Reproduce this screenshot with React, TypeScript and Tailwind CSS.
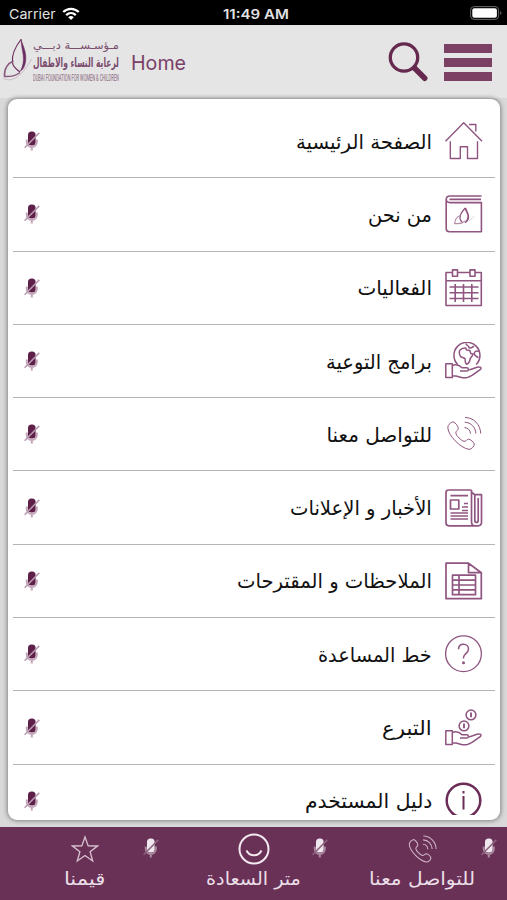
import { useLayoutEffect, useRef, type ReactNode } from "react";

const arabic = "font-['DejaVu_Sans',sans-serif]";

/** Condenses or widens a single line so that it fills its box exactly. */
function FitText({ children, box, text, dir = "rtl" }: { children: string; box: string; text: string; dir?: "rtl" | "ltr" }) {
  const outer = useRef<HTMLDivElement>(null);
  const inner = useRef<HTMLSpanElement>(null);
  useLayoutEffect(() => {
    const fit = () => {
      if (!outer.current || !inner.current) return;
      const ratio = outer.current.clientWidth / inner.current.offsetWidth;
      inner.current.style.transform = `scaleX(${ratio})`;
    };
    fit();
    document.fonts?.ready.then(fit);
  }, [children]);
  return (
    <div ref={outer} dir={dir} className={`${box} flex shrink-0 items-center`}>
      <span ref={inner} className={`${text} shrink-0 whitespace-nowrap ${dir === "rtl" ? "origin-right" : "origin-left"}`}>
        {children}
      </span>
    </div>
  );
}

function Icon({ children, width = 1.3 }: { children: ReactNode; width?: number }) {
  return (
    <svg viewBox="0 0 38 38" className="size-[38px] shrink-0" fill="none" stroke="#8f5580" strokeWidth={width} strokeLinejoin="round">
      {children}
    </svg>
  );
}

function Mic({ light = false }: { light?: boolean }) {
  const body = light ? "#f1e8ef" : "#5e2049";
  const frame = light ? "#a98a9f" : "#c3a5ba";
  const slash = light ? "#8d6580" : "#b79ab0";
  return (
    <svg viewBox="0 0 16 20" className="h-5 w-4 shrink-0" fill="none">
      <path d="M2.800 8.500v2.500c0 3 2.200 4.900 5 4.900s5-1.900 5-4.900V8.500M7.800 16v3.400" stroke={frame} strokeWidth="2" />
      <rect x="4" y=".4" width="7.600" height="14" rx="3.500" fill={body} />
      <path d="M.6 16.800 15.300 1.900" stroke={slash} strokeWidth="1.500" />
    </svg>
  );
}

const hand = (
  <path d="M.8 21.800h6.500v13.700H.8zM7.300 23.500c4-1.500 7.200-.3 9.700 2.300h4.700c2.300 0 2.300 3.200 0 3.200H15M22.800 28c4.700-.5 8.500-3.200 11.200-3 1.800 0 2.700 1.300 1.500 2.300-4.500 3.200-8.500 7-13.300 8.300-5.200 1.400-8.800-2.200-14.900-1.800" />
);

const handset = (
  <path d="M3.200 10.700c1-2 3-3.500 5-3.900 2.500 1 5 4.500 5.100 6.800-.1 1.700-2.500 2.300-2.500 4.300.5 3 5.200 7.500 8.200 8.400 2 .4 2.800-2.100 4.600-2.100 2.100.3 5 2.800 5.700 4.900.2 2.200-2.900 5.300-5.300 5.300C15 33 3.200 20 2.900 13.200c0-.9 0-1.800.3-2.500Z" />
);
const waves = (
  <path d="M20 2.500c8.500 0 15.500 7 15.700 16M19.700 7.200c6.200.2 10.900 5.100 11.200 11.300M19.500 12.600c3.500.2 5.700 2.500 6 6" />
);

const flame = (
  <>
    <path d="M20.300 13c-3 3-5.600 7.500-5.300 10.500.2 1.800 1.500 2.500 2.200 4" />
    <path d="M20.300 13c.5 3 3.300 5 3 9-.2 3-1.500 4.500-3.300 5.500" strokeWidth="1.800" />
    <path d="M15.500 20.500c-3.500 1-5.500 3.800-5.800 8 3.800.4 8-.3 11-2.500" stroke="#b48fa9" strokeWidth="1.300" />
  </>
);

type Entry = { label: string; box: string; icon: ReactNode };

const entries: Entry[] = [
  {
    label: "الصفحة الرئيسية",
    box: "w-[136px]",
    icon: (
      <Icon width={1.4}>
        <path d="M.5 19.300 18.700 .8 37 19.300M24 2.500h6.800v7M5.300 19.300v17.200h10V24.700h7.200v11.800h10V19.300" />
      </Icon>
    ),
  },
  {
    label: "من نحن",
    box: "w-[64px]",
    icon: (
      <Icon width={1.6}>
        <path d="M36.500 1H5.200Q1.200 1 1.200 4.500V33.500q0 3.200 3.200 3.200h32V7.600H5Q1.200 7.600 1.200 4.300M4.500 4.400h31.500" />
        <g strokeWidth="1.300">{flame}</g>
        <path d="m24 26 5.500-5" stroke="#d9c3d3" strokeWidth=".7" />
      </Icon>
    ),
  },
  {
    label: "الفعاليات",
    box: "w-[75px]",
    icon: (
      <Icon width={1.6}>
        <path d="M7.500 3.500H1v33h35.300v-33H30M12.500 3.500H25M1 11.800h35.300M7.500 .9h5v6.300h-5zM25 .9h5v6.300h-5zM10.200 15v18M18.500 15v18M26.800 15v18M4.500 18h29M4.500 23.700h29M4.500 29.500h29" />
      </Icon>
    ),
  },
  {
    label: "برامج التوعية",
    box: "w-[106px]",
    icon: (
      <Icon width={1.5}>
        <path d="M12.700 22.500A13 13 0 1 1 31.200 22.500" />
        <path d="M14.500 8.500c1.800-2 3.500-2.800 6.200-2.500l.8 2 3.300.5 1 3 2.200.5c-.3 2.500-2.800 3.500-3 5.500-.5 2.500-2 4.500-3.600 4.700-1.400-1.200-1.300-3.500-1.400-5.700l-4.300-1.700c-1.400-1.800-1.700-4-1.200-6.300ZM21 1.300c.5 2.500 3 2 3 4.500 2 .8 3.200-.5 5-1.800M33.800 9.500c-2.600-1-4.500 0-4.600 2.200.3 2.300 2.500 3 4.300 4" />
        {hand}
      </Icon>
    ),
  },
  { label: "للتواصل معنا", box: "w-[106px]", icon: <Icon width={1}>{handset}{waves}</Icon> },
  {
    label: "الأخبار و الإعلانات",
    box: "w-[142px]",
    icon: (
      <Icon width={1.7}>
        <path d="M26.500 1H3.500Q1 1 1 3.500v30.300q0 3 3 3h29q3.500 0 3.500-3.500V5.700h-6.700M26.500 1v31.500q0 4.300 3.300 4.300M26.500 3.300l3.300 2.400v25.500q0 2.300 1.700 2.300t1.700-2.300V9M5.500 6.700h17.500M5.500 11h8.300v9H5.500zM19 14.500h4M17 18h6M17 21.500h6M5.500 24h17.500M5.500 27h17.500M5.500 30h17.500" />
      </Icon>
    ),
  },
  {
    label: "الملاحظات و المقترحات",
    box: "w-[195px]",
    icon: (
      <Icon width={1.7}>
        <path d="M1 1.200h22.500L36.300 10.700v26H1zM23.500 1.200v9.500h12.800M7.500 13.200h23v19.500h-23zM14 13.200v19.500M7.500 18.200h23M7.500 23h23M7.500 27.800h23" />
      </Icon>
    ),
  },
  {
    label: "خط المساعدة",
    box: "w-[114px]",
    icon: (
      <Icon width={1.3}>
        <circle cx="18.500" cy="18.700" r="17.900" />
        <path d="M13.500 14.300c0-3.200 2.200-5 5-5s5 1.900 5 4.700c0 4.500-5 4.700-5 8.600v1" strokeWidth="1.500" />
        <circle cx="18.500" cy="27.700" r="1.500" fill="#8f5580" stroke="none" />
      </Icon>
    ),
  },
  {
    label: "التبرع",
    box: "w-[50px]",
    icon: (
      <Icon width={1.5}>
        <circle cx="26" cy="5.900" r="4.900" />
        <circle cx="19" cy="16.900" r="4.900" />
        <path d="M26 3.600v4.600M19 14.600v4.600" strokeWidth="1.900" />
        {hand}
      </Icon>
    ),
  },
  {
    label: "دليل المستخدم",
    box: "w-[127px]",
    icon: (
      <svg viewBox="0 0 38 38" className="size-[38px] shrink-0" fill="none" stroke="#6b2c57">
        <circle cx="18.500" cy="18.500" r="16.800" strokeWidth="2.500" />
        <path d="M18.500 14v13.500M18.500 9v2.500" strokeWidth="2" />
      </svg>
    ),
  },
];

function StatusBar() {
  return (
    <div className="grid h-[25px] grid-cols-[1fr_auto_1fr] items-center bg-black pr-[5px] pl-[9px] pt-[3px] font-['Inter',sans-serif] text-[13px] text-[#e2e2e2]">
      <div className="flex items-center gap-[6px]">
        <FitText dir="ltr" box="w-[47px]" text="leading-5">Carrier</FitText>
        <svg viewBox="0 0 18 13" className="mb-px h-[13px] w-[18px]" fill="none" stroke="#fff" strokeWidth="2.300">
          <path d="M1.200 5c4.500-4.300 11-4.300 15.600 0M4.200 8.100c2.800-2.600 6.800-2.600 9.600 0" />
          <path d="M6.200 10.200c1.700-1.500 3.900-1.500 5.600 0L9 13z" fill="#fff" stroke="none" />
        </svg>
      </div>
      <FitText dir="ltr" box="w-[66px]" text="leading-5 font-semibold">11:49 AM</FitText>
      <svg viewBox="0 0 32 14" className="mb-[2px] h-[14px] w-8 justify-self-end" fill="none">
        <rect x=".6" y=".6" width="28" height="12.800" rx="3.500" stroke="#686868" />
        <rect x="2.300" y="2.300" width="24.600" height="9.400" rx="2" fill="#fff" />
        <path d="M30.300 5c1.500.7 1.500 3.300 0 4z" fill="#777" />
      </svg>
    </div>
  );
}

function Logo() {
  return (
    <div className="flex items-center">
      <svg viewBox="0 0 30 48" className="h-12 w-[30px] shrink-0" fill="none" stroke="#6b2c60">
        <path d="M19 2.500C13.500 9.500 9.500 17.500 10.500 25.500c.7 5.500 5 7 7.500 9.500" strokeWidth="1.200" />
        <path d="M19 2c1 5 5 11 4.800 19.500-.1 5.500-1.800 10.500-5.300 12.500 2.500-5 3.500-10 2.700-16C20.500 13 19.200 8.500 19 2Z" fill="#6b2c60" strokeWidth=".6" />
        <path d="M11.500 24C6 26 1.800 32 2.500 39.500c5.500.3 11.500-.8 15.500-4" stroke="#8a5a80" strokeWidth="1.500" />
        <path d="M1.500 41.500c9 4.500 19-3 28-19.500" stroke="#c3b1c0" strokeWidth=".8" />
      </svg>
      <div className={`flex w-[87px] flex-col pl-px ${arabic} text-[#7a4c6d]`}>
        <FitText box="h-[15px] w-[86px]" text="text-[11px] leading-none">مـؤسـســـة دبـــي</FitText>
        <FitText box="h-[18px] w-[86px]" text="text-[13px] leading-none font-bold">لرعاية النساء والاطفال</FitText>
        <FitText dir="ltr" box="h-[13px] w-[86px]" text="font-['Roboto',sans-serif] text-[9.500px] leading-none font-medium text-[#9a7f92]">
          DUBAI FOUNDATION FOR WOMEN &amp; CHILDREN
        </FitText>
      </div>
    </div>
  );
}

function Header() {
  return (
    <header className="flex h-[73px] items-start bg-[#e5e5e5] pr-[15px] pl-[2px]">
      <div className="pt-[12px]">
        <Logo />
      </div>
      <div className="pt-[24px] pl-3 font-['Inter',sans-serif] text-[#7a3e68]">
        <FitText dir="ltr" box="w-[55px]" text="text-[20px] leading-7">Home</FitText>
      </div>
      <svg viewBox="0 0 40 41" className="mt-[16px] ml-auto h-[41px] w-10" fill="none" stroke="#65294f">
        <circle cx="16" cy="16.500" r="13.700" strokeWidth="3.300" />
        <path d="m26.500 27 10.200 10.300" strokeWidth="5.500" strokeLinecap="round" />
      </svg>
      <div className="mt-[19px] ml-[16px] flex w-12 flex-col gap-[5px]">
        <span className="h-[9px] bg-[#7b4064]" />
        <span className="h-[9px] bg-[#7b4064]" />
        <span className="h-[9px] bg-[#7b4064]" />
      </div>
    </header>
  );
}

function Tab({ label, box, icon }: { label: string; box: string; icon: ReactNode }) {
  return (
    <div className="relative flex h-full w-[169px] flex-col items-center pt-[4px]">
      <div className="flex h-9 items-center justify-center">{icon}</div>
      <div className={`${arabic} text-[#eadfe7]`}>
        <FitText box={box} text="text-[18px] leading-[24px]">{label}</FitText>
      </div>
      <div className="absolute top-[11px] right-[10px]">
        <Mic light />
      </div>
    </div>
  );
}

export default function App() {
  return (
    <div className="flex h-[900px] w-[507px] flex-col overflow-hidden bg-[#d9d9d9]">
      <StatusBar />
      <Header />
      <main className="mr-[7px] ml-2 mt-px flex h-[721px] flex-col overflow-hidden rounded-[9px] bg-white px-[5px] pt-[6px] pb-[5px] shadow-[0_0_4px_1px_rgba(0,0,0,0.4)]">
        <div className="flex min-h-0 flex-1 flex-col overflow-hidden">
          {entries.map((entry) => (
            <div key={entry.label} className="flex h-[73.3px] shrink-0 items-center border-b-[1.5px] border-[#b4b4b4] pr-3 pl-[11px]">
              <Mic />
              <div className={`mr-[13px] ml-auto pt-px ${arabic} text-[#111]`}>
                <FitText box={entry.box} text="text-[20px] leading-8">{entry.label}</FitText>
              </div>
              {entry.icon}
            </div>
          ))}
        </div>
      </main>
      <footer className="mt-[7px] flex flex-1 bg-[#6a3157]">
        <Tab
          label="قيمنا"
          box="w-[41px]"
          icon={
            <svg viewBox="0 0 28 28" className="size-7" fill="none" stroke="#d8c3d0" strokeWidth="1.300">
              <path d="m14 2 3.200 8.900 9.300.1-7.400 5.700 2.600 9.300-7.700-5.500L6.300 26l2.600-9.300L1.500 11l9.300-.1z" />
            </svg>
          }
        />
        <Tab
          label="متر السعادة"
          box="w-[95px]"
          icon={
            <svg viewBox="0 0 32 32" className="size-8" fill="none" stroke="#f3e9f0">
              <circle cx="16" cy="16" r="14.500" strokeWidth="2" />
              <path d="M8.500 17.500c3 6.300 12 6.300 15 0" strokeWidth="1.900" />
            </svg>
          }
        />
        <Tab
          label="للتواصل معنا"
          box="w-[106px]"
          icon={
            <svg viewBox="0 0 38 38" className="size-[31px]" fill="none" stroke="#cdb3c5" strokeWidth="1.300">
              {handset}
              {waves}
            </svg>
          }
        />
      </footer>
    </div>
  );
}
